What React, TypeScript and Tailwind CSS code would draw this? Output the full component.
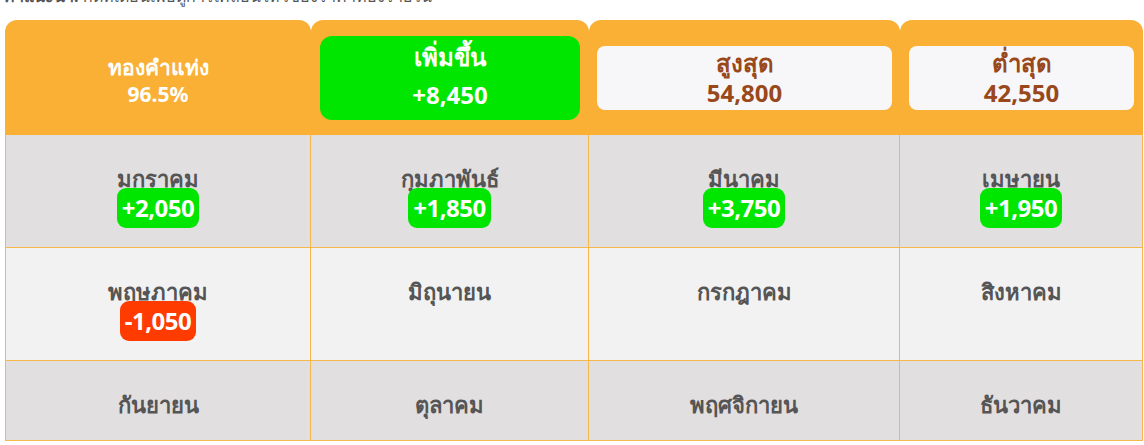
import React from "react";

type Month = { name: string; change?: number };

const months: Month[] = [
  { name: "มกราคม", change: 2050 },
  { name: "กุมภาพันธ์", change: 1850 },
  { name: "มีนาคม", change: 3750 },
  { name: "เมษายน", change: 1950 },
  { name: "พฤษภาคม", change: -1050 },
  { name: "มิถุนายน" },
  { name: "กรกฎาคม" },
  { name: "สิงหาคม" },
  { name: "กันยายน" },
  { name: "ตุลาคม" },
  { name: "พฤศจิกายน" },
  { name: "ธันวาคม" },
];

const rowBg = ["bg-[#e1dfe0]", "bg-[#f2f2f2]", "bg-[#e1dfe0]"];
const rowH = ["h-[113px]", "h-[113px]", "h-[80px]"];

function fmt(n: number) {
  const s = Math.abs(n).toLocaleString("en-US");
  return (n >= 0 ? "+" : "-") + s;
}

// one month cell, badge below the name when there is a change
function MonthCell({ m, row }: { m: Month; row: number }) {
  return (
    <div
      className={`${rowBg[row]} ${rowH[row]} flex flex-col items-center border-r border-b border-[#f5b84a] pt-[29px]`}
    >
      <div className="text-[22px] font-bold leading-[28px] text-[#555]">{m.name}</div>
      {m.change !== undefined && (
        <div
          className={`-mt-[4px] rounded-[9px] px-[5px] text-[24px] font-bold leading-[40px] tracking-[-0.5px] text-white ${
            m.change >= 0 ? "bg-[#00e600]" : "bg-[#ff3b00]"
          }`}
        >
          {fmt(m.change)}
        </div>
      )}
    </div>
  );
}

export default function App() {
  const rows = [months.slice(0, 4), months.slice(4, 8), months.slice(8, 12)];
  return (
    <div
      className="h-[445px] w-[1144px] overflow-hidden bg-white"
      style={{ fontFamily: "'Noto Sans', 'DejaVu Sans', sans-serif" }}
    >
      <div className="-mt-[14px] mb-[14px] h-[20px] pl-[4px] text-[16px] leading-[20px] text-[#555]">
        <b>คำแนะนำ:</b> กดที่เดือนเพื่อดูการเคลื่อนไหวของราคาทองรายวัน
      </div>

      <div className="ml-[5px] grid w-[1138px] grid-cols-[306px_278px_311px_243px]">
        {/* header */}
        <div className="flex h-[115px] flex-col items-center justify-center rounded-t-[12px] bg-[#f9b034] pt-[6px] text-[21px] font-bold leading-[27px] text-white">
          <div>ทองคำแท่ง</div>
          <div>96.5%</div>
        </div>
        <div className="h-[115px] rounded-t-[12px] bg-[#f9b034] px-[9px] pt-[16px] pb-[15px]">
          <div className="flex h-full flex-col items-center justify-center rounded-[12px] bg-[#00e600] pb-[4px] text-[24px] font-bold leading-[38px] text-white">
            <div>เพิ่มขึ้น</div>
            <div>+8,450</div>
          </div>
        </div>
        <div className="h-[115px] rounded-t-[12px] bg-[#f9b034] px-[8px] pt-[26px] pb-[25px]">
          <div className="flex h-full flex-col items-center justify-center rounded-[8px] bg-[#f7f7f9] text-[24px] font-bold leading-[30px] text-[#99481c]">
            <div>สูงสุด</div>
            <div>54,800</div>
          </div>
        </div>
        <div className="h-[115px] rounded-t-[12px] bg-[#f9b034] px-[9px] pt-[26px] pb-[25px]">
          <div className="flex h-full flex-col items-center justify-center rounded-[8px] bg-[#f7f7f9] text-[24px] font-bold leading-[30px] text-[#99481c]">
            <div>ต่ำสุด</div>
            <div>42,550</div>
          </div>
        </div>

        {rows.map((r, i) =>
          r.map((m, j) => (
            <div key={m.name} className={j === 0 ? "border-l border-[#f5b84a]" : ""}>
              <MonthCell m={m} row={i} />
            </div>
          ))
        )}
      </div>
    </div>
  );
}
